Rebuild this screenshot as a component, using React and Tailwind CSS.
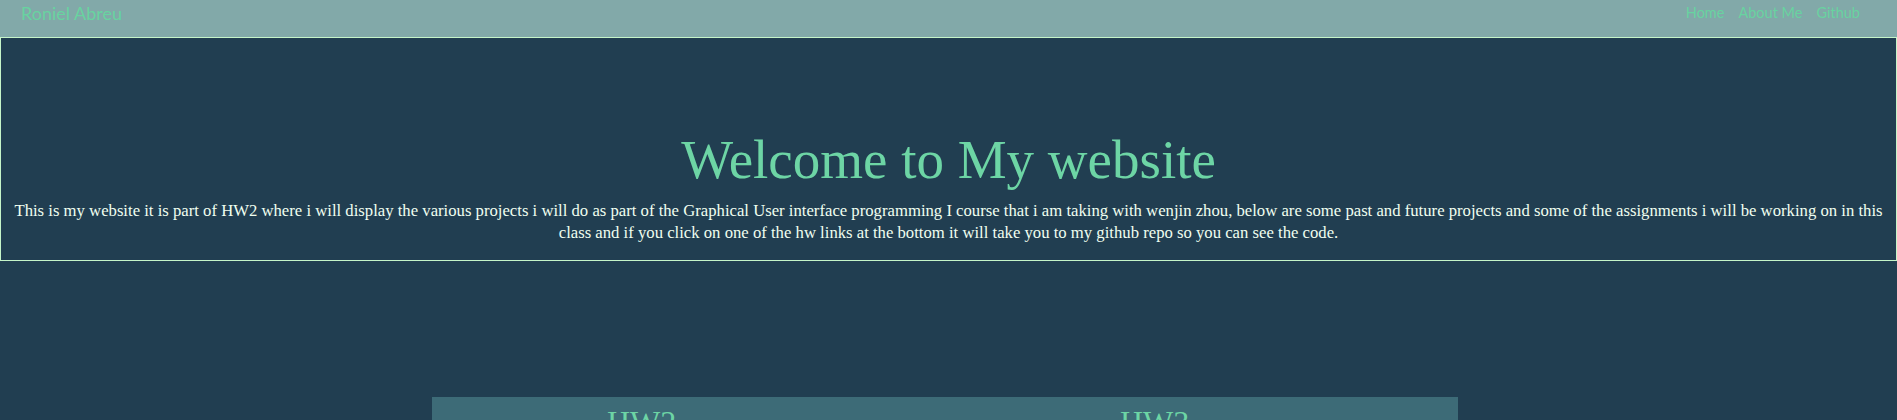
import React from 'react';

const navLinks = ['Home', 'About Me', 'Github'];

const App = () => {
    return (
        <div className="min-h-screen bg-[#213e51] font-['Liberation_Serif',serif]">
            {/* Nav */}
            <nav className="h-[37px] bg-[#82a9a9] flex justify-between items-start pl-[21px] pr-[37px] font-['Lato',sans-serif] text-[#68d3a0]">
                <a className="text-[18px] leading-none pt-[4px]">Roniel Abreu</a>
                <ul className="flex gap-[14px] text-[14.5px] leading-none pt-[6px]">
                    {navLinks.map((l) => (
                        <li key={l}>{l}</li>
                    ))}
                </ul>
            </nav>

            {/* Header */}
            <header className="border border-[#c5f5c9] text-center pt-[94px] pb-[16px] px-[8px]">
                <h1 className="text-[55px] leading-none text-[#6dd5a5]">Welcome to My website</h1>
                <p className="mt-[13px] text-[16.7px] leading-[22px] text-[#f0fff0]">
                    This is my website it is part of HW2 where i will display the various projects i will do as part of the Graphical User interface programming I course that i am taking with wenjin zhou, below are some past and future projects and some of the assignments i will be working on in this<br />
                    class and if you click on one of the hw links at the bottom it will take you to my github repo so you can see the code.
                </p>
            </header>

            {/* Homework */}
            <section className="mt-[136px] ml-[432px] w-[1026px] h-40 bg-[#3d6b77] grid grid-cols-2 pt-[9px]">
                <div className="pl-[175px]">
                    <h2 className="text-[32px] leading-none text-[#6dd5a5]">HW2</h2>
                </div>
                <div className="pl-[175px]">
                    <h2 className="text-[32px] leading-none text-[#6dd5a5]">HW3</h2>
                </div>
            </section>
        </div>
    );
};

export default App;
